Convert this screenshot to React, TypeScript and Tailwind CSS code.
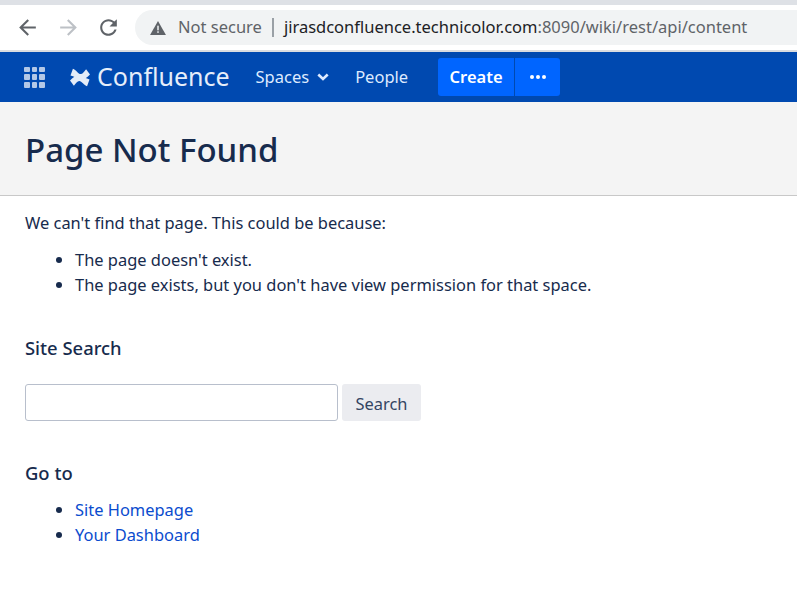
const font = { fontFamily: '"Noto Sans", "Open Sans", sans-serif' };

function AppGrid() {
  const cells = [0, 1, 2];
  return (
    <div className="grid grid-cols-3 gap-[2px] w-[21px] h-[21px]">
      {cells.flatMap((r) =>
        cells.map((c) => <div key={`${r}-${c}`} className="w-[5.7px] h-[5.7px] rounded-[1px] bg-[#b3c8e7]" />)
      )}
    </div>
  );
}

function Logo() {
  const band = 'M3 .5C6 1.500 8.500 6 11 6c2 0 3.500-2.500 5.500-5l4 5.500c-3.500 3.500-6.500 5.500-10 4.500C6.500 10 4 8.500.5 7.500z';
  return (
    <svg width="20" height="19" viewBox="0 0 20.500 19" fill="#e4ecf8">
      <path d={band} />
      <path d={band} transform="rotate(180 10.250 9.500)" />
    </svg>
  );
}

function ToolIcon({ d, className }: { d: string; className: string }) {
  return (
    <svg width="25" height="25" viewBox="0 0 24 24" fill="currentColor" className={className}>
      <path d={d} />
    </svg>
  );
}

function BrowserBar() {
  return (
    <div className="h-[45px] bg-white flex items-center pl-[15px]">
      <ToolIcon className="text-[#5f6368]" d="M20 11H7.830l5.590-5.590L12 4l-8 8 8 8 1.410-1.410L7.830 13H20v-2z" />
      <ToolIcon className="text-[#bdc1c6] ml-[16px]" d="M4 11h12.170l-5.590-5.590L12 4l8 8-8 8-1.410-1.410L16.170 13H4v-2z" />
      <ToolIcon
        className="text-[#5f6368] ml-[15px]"
        d="M17.650 6.350C16.200 4.900 14.210 4 12 4c-4.420 0-7.990 3.580-7.990 8s3.570 8 7.990 8c3.730 0 6.840-2.550 7.730-6h-2.080c-.82 2.330-3.040 4-5.650 4-3.310 0-6-2.690-6-6s2.690-6 6-6c1.660 0 3.140.69 4.220 1.780L13 11h7V4l-2.350 2.350z"
      />
      <div className="ml-[14px] flex-1 h-[35px] bg-[#f1f3f4] rounded-l-full flex items-center pl-[15px] text-[16.5px] whitespace-nowrap overflow-hidden">
        <svg width="16" height="14" viewBox="0 0 17 15" fill="#5f6368">
          <path d="M8.500 0 17 15H0z" />
          <rect x="7.700" y="5" width="1.600" height="5" fill="#f1f3f4" />
          <rect x="7.700" y="11" width="1.600" height="1.700" fill="#f1f3f4" />
        </svg>
        <span className="ml-[12px] text-[#5f6368]">Not secure</span>
        <span className="ml-[10px] w-[2px] h-[19px] bg-[#9aa0a6]" />
        <span className="ml-[10px] text-[#202124]">
          jirasdconfluence.technicolor.com<span className="text-[#5f6368]">:8090/wiki/rest/api/content</span>
        </span>
      </div>
    </div>
  );
}

function NavBar() {
  return (
    <nav className="h-[50px] bg-[#0049b0] flex items-center pl-[24px] text-[#deebff] text-[16.5px] whitespace-nowrap">
      <AppGrid />
      <div className="ml-[25px]"><Logo /></div>
      <span className="ml-[7px] pb-[2px] text-[25px] text-[#e6eefa] leading-none">Confluence</span>
      <span className="ml-[26px]">Spaces</span>
      <svg width="12" height="8" viewBox="0 0 12 8" fill="none" stroke="currentColor" strokeWidth="2.600" className="ml-[8px]">
        <path d="M1.300 1.500 6 6l4.700-4.500" />
      </svg>
      <span className="ml-[26px]">People</span>
      <div className="ml-[30px] flex h-[38px] rounded-[3px] overflow-hidden bg-[#0065ff] text-white">
        <span className="w-[76px] flex items-center justify-center font-semibold text-[16.5px]">Create</span>
        <span className="w-[1px] bg-[#0049b0]" />
        <span className="w-[45px] flex items-center justify-center gap-[2px]">
          <span className="w-[4px] h-[4px] rounded-full bg-white" />
          <span className="w-[4px] h-[4px] rounded-full bg-white" />
          <span className="w-[4px] h-[4px] rounded-full bg-white" />
        </span>
      </div>
    </nav>
  );
}

export default function App() {
  return (
    <div className="h-[613px] overflow-hidden bg-white text-[#172b4d]" style={font}>
      <div className="h-[5px] bg-[#dee1e6]" />
      <BrowserBar />
      <div className="h-[2px] bg-[#dadce0]" />
      <NavBar />
      <header className="h-[94px] bg-[#f4f4f4] border-b border-[#c8c8c8] flex items-center pl-[25px]">
        <h1 className="text-[33px] font-medium leading-none pt-[2px]">Page Not Found</h1>
      </header>
      <main className="pl-[25px] text-[16.450px] leading-[25px]">
        <p className="mt-[14px]">We can't find that page. This could be because:</p>
        <ul className="mt-[12px] pl-[50px] list-disc">
          <li>The page doesn't exist.</li>
          <li>The page exists, but you don't have view permission for that space.</li>
        </ul>
        <h2 className="mt-[38px] text-[18.400px] font-medium">Site Search</h2>
        <form className="mt-[24px] flex gap-[4px]">
          <input className="w-[313px] h-[37px] bg-white border border-[#b8bfcc] rounded-[3px]" />
          <button type="button" className="w-[79px] h-[37px] pt-[2px] rounded-[3px] bg-[#ebecf0] text-[#344563]">Search</button>
        </form>
        <h2 className="mt-[39px] text-[18.400px] font-medium">Go to</h2>
        <ul className="mt-[12px] pl-[50px] list-disc">
          <li><a className="text-[#0b4cce]">Site Homepage</a></li>
          <li><a className="text-[#0b4cce]">Your Dashboard</a></li>
        </ul>
      </main>
    </div>
  );
}
